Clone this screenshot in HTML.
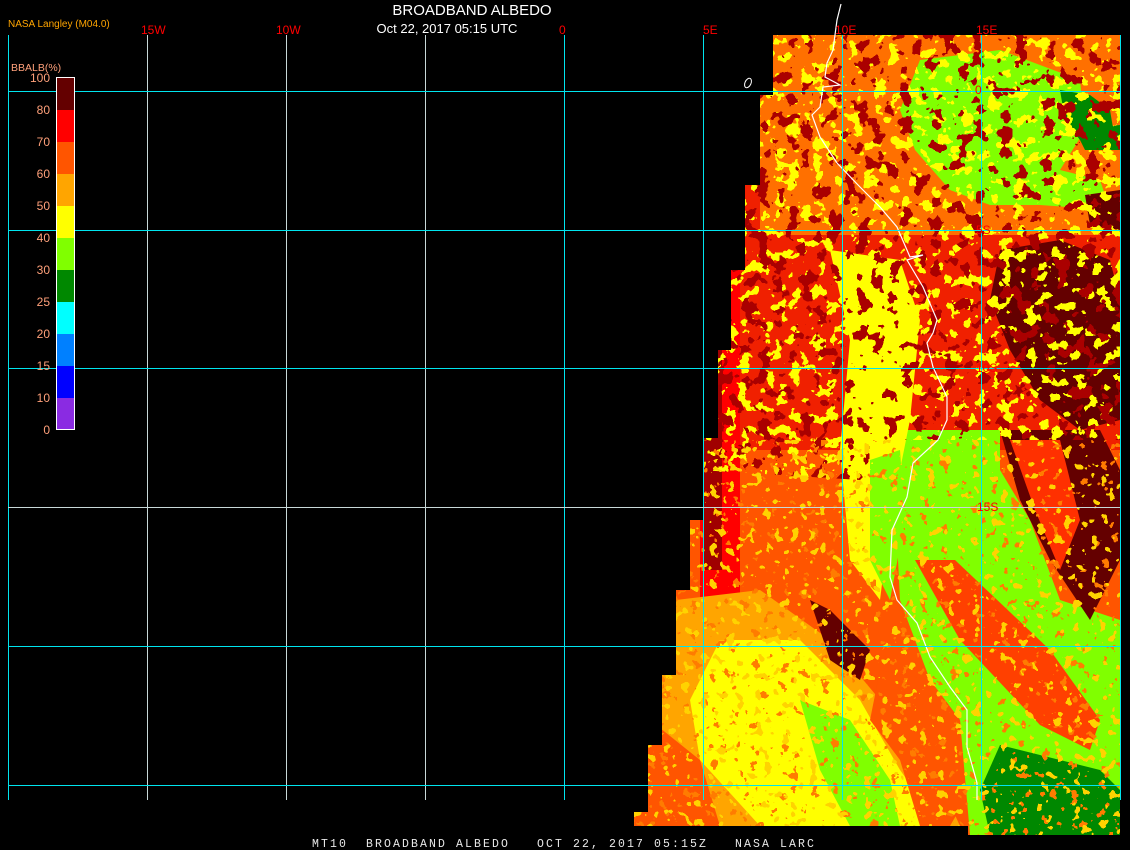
<!DOCTYPE html>
<html><head><meta charset="utf-8"><style>
html,body{margin:0;padding:0;background:#000;width:1130px;height:850px;overflow:hidden}
svg{display:block}
</style></head><body>
<svg width="1130" height="850" viewBox="0 0 1130 850" xmlns="http://www.w3.org/2000/svg">
<defs>
<clipPath id="img"><polygon points="773,35 1120,35 1120,835 968,835 968,826 634,826 634,812 648,812 648,745 662,745 662,675 676,675 676,590 690,590 690,520 704,520 704,438 718,438 718,350 731,350 731,270 745,270 745,185 760,185 760,95 773,95"/></clipPath>
<clipPath id="upper"><polygon points="600,30 1130,30 1130,440 900,440 860,480 700,470 600,470"/></clipPath>
<clipPath id="lower"><polygon points="600,440 1130,440 1130,850 600,850"/></clipPath>
<filter id="fdr" filterUnits="userSpaceOnUse" x="620" y="30" width="510" height="810">
<feTurbulence type="fractalNoise" baseFrequency="0.07" numOctaves="3" seed="4"/>
<feColorMatrix type="matrix" values="0 0 0 0 0.4  0 0 0 0 0  0 0 0 0 0  6 0 0 0 -3.15"/>
<feComponentTransfer><feFuncA type="discrete" tableValues="0 1"/></feComponentTransfer>
</filter>
<filter id="fy" filterUnits="userSpaceOnUse" x="620" y="30" width="510" height="810">
<feTurbulence type="fractalNoise" baseFrequency="0.08" numOctaves="3" seed="11"/>
<feColorMatrix type="matrix" values="0 0 0 0 1  0 0 0 0 1  0 0 0 0 0  6 0 0 0 -3.1"/>
<feComponentTransfer><feFuncA type="discrete" tableValues="0 1"/></feComponentTransfer>
</filter>
<filter id="fr" filterUnits="userSpaceOnUse" x="620" y="30" width="510" height="810">
<feTurbulence type="fractalNoise" baseFrequency="0.1" numOctaves="3" seed="21"/>
<feColorMatrix type="matrix" values="0 0 0 0 1  0 0 0 0 0.2  0 0 0 0 0  6 0 0 0 -3.6"/>
<feComponentTransfer><feFuncA type="discrete" tableValues="0 1"/></feComponentTransfer>
</filter>
<filter id="fg" filterUnits="userSpaceOnUse" x="620" y="30" width="510" height="810">
<feTurbulence type="fractalNoise" baseFrequency="0.11" numOctaves="2" seed="31"/>
<feColorMatrix type="matrix" values="0 0 0 0 1  0 0 0 0 0.65  0 0 0 0 0  6 0 0 0 -3.4"/>
<feComponentTransfer><feFuncA type="discrete" tableValues="0 1"/></feComponentTransfer>
</filter>
</defs>

<g clip-path="url(#img)">
<rect x="620" y="30" width="510" height="810" fill="#ff5500"/>
<rect x="620" y="30" width="510" height="420" fill="#f02000"/>
<rect x="760" y="35" width="360" height="200" fill="#ff7000"/>
<rect x="700" y="230" width="40" height="380" fill="#f00"/>
<rect x="704" y="270" width="18" height="300" fill="#a00000"/>
<rect x="740" y="230" width="40" height="220" fill="#f02000"/>
<polygon fill="#80ff00" points="920,60 1000,50 1080,80 1085,130 1060,170 1100,180 1110,210 1040,205 990,205 950,190 915,150 900,110"/>
<polygon fill="#008800" points="1060,90 1090,95 1110,110 1115,140 1080,140 1065,120"/>
<polygon fill="#008800" points="1075,130 1120,125 1120,150 1085,150"/>
<polygon fill="#640000" points="1000,250 1060,240 1110,260 1120,300 1120,420 1080,430 1040,400 1010,350 990,300"/>
<polygon fill="#640000" points="1085,195 1120,190 1120,230 1090,225"/>
<polygon fill="#80ff00" points="905,430 1000,430 1000,470 1030,520 1060,600 1120,620 1120,835 970,835 960,720 930,680 900,600 895,500"/>
<polygon fill="#640000" points="1000,430 1100,430 1120,470 1120,560 1090,620 1050,560 1020,500"/>
<polygon fill="#ff3000" points="1010,440 1060,440 1080,520 1060,570 1035,510"/>
<polygon fill="#ff4000" points="915,560 955,560 1050,650 1100,720 1090,750 1040,725 960,640"/>
<polygon fill="#008800" points="1000,745 1060,760 1100,770 1120,790 1120,835 990,835 980,790"/>
<polygon fill="#ffa500" points="676,600 760,590 830,640 880,700 930,760 960,826 634,826 650,700"/>
<polygon fill="#ff0" points="720,640 800,640 860,700 900,770 940,826 760,826 700,760 690,700"/>
<polygon fill="#80ff00" points="800,700 850,720 890,780 900,826 850,826 820,770"/>
<polygon fill="#ff5500" points="880,670 930,680 960,720 965,800 950,826 920,826 900,760 870,720"/>
<polygon fill="#ff5500" points="650,720 700,760 720,826 634,826"/>
<polygon fill="#ff0" points="830,250 900,260 920,320 910,420 890,520 880,600 850,560 840,450 850,340"/>
<polygon fill="#80ff00" points="870,460 900,450 905,520 890,600 870,560"/>
<polygon fill="#640000" points="810,600 830,610 870,650 860,680 830,660"/>
<g clip-path="url(#upper)">
<rect x="620" y="30" width="510" height="420" filter="url(#fy)"/>
<rect x="620" y="30" width="510" height="420" filter="url(#fdr)"/>
</g>
<g clip-path="url(#lower)">
<rect x="620" y="430" width="510" height="410" filter="url(#fr)"/>
<rect x="620" y="430" width="510" height="410" filter="url(#fg)"/>
</g>
</g>

<polyline fill="none" stroke="#fff" stroke-width="1.2" points="841,4 837,20 833,50 827,63 825,77 840,85 823,87 820,107 812,115 820,137 837,163 860,187 880,207 897,227 910,257 923,255 907,260 923,287 937,320 933,333 927,343 933,367 947,397 947,420 938,440 913,463 907,497 892,530 890,577 897,600 917,623 930,657 950,687 967,710 967,747 977,783 977,800"/>
<ellipse cx="748" cy="83" rx="3" ry="5" transform="rotate(25 748 83)" fill="none" stroke="#fff" stroke-width="1"/>

<g stroke="#00e5ee" stroke-width="1">
<line x1="8.5" y1="35" x2="8.5" y2="800"/>
<line x1="147.5" y1="35" x2="147.5" y2="800" stroke="#c8d8d8"/>
<line x1="286.5" y1="35" x2="286.5" y2="800" stroke="#c8d8d8"/>
<line x1="425.5" y1="35" x2="425.5" y2="800" stroke="#c8d8d8"/>
<line x1="564.5" y1="35" x2="564.5" y2="800"/>
<line x1="703.5" y1="35" x2="703.5" y2="800"/>
<line x1="842.5" y1="35" x2="842.5" y2="800"/>
<line x1="981.5" y1="35" x2="981.5" y2="800"/>
<line x1="1120.5" y1="35" x2="1120.5" y2="800"/>
<line x1="8" y1="91.5" x2="1120" y2="91.5"/>
<line x1="8" y1="230.5" x2="1120" y2="230.5"/>
<line x1="8" y1="368.5" x2="1120" y2="368.5"/>
<line x1="8" y1="507.5" x2="1120" y2="507.5" stroke="#c8d8d8"/>
<line x1="8" y1="646.5" x2="1120" y2="646.5"/>
<line x1="8" y1="785.5" x2="1120" y2="785.5"/>
</g>

<g font-family="Liberation Sans, sans-serif" font-size="12" fill="#f00">
<text x="141" y="34">15W</text><text x="276" y="34">10W</text>
<text x="559" y="34">0</text><text x="703" y="34">5E</text>
<text x="835" y="34">10E</text><text x="976" y="34">15E</text>
<text x="975" y="94">0</text><text x="976" y="234">5S</text>
<text x="976" y="372">10S</text><text x="977" y="511">15S</text>
</g>
<text x="472" y="15" font-family="Liberation Sans, sans-serif" font-size="15" fill="#fff" text-anchor="middle">BROADBAND ALBEDO</text>
<rect x="368" y="18" width="160" height="16" fill="#000"/>
<text x="447" y="33" font-family="Liberation Sans, sans-serif" font-size="13" fill="#fff" text-anchor="middle">Oct 22, 2017 05:15 UTC</text>
<text x="8" y="27" font-family="Liberation Sans, sans-serif" font-size="10" fill="#ffa500">NASA Langley (M04.0)</text>

<text x="11" y="71" font-family="Liberation Sans, sans-serif" font-size="10.5" fill="#ffa07a">BBALB(%)</text>
<g>
<rect x="57" y="78" width="18" height="32" fill="#640000"/>
<rect x="57" y="110" width="18" height="32" fill="#f00"/>
<rect x="57" y="142" width="18" height="32" fill="#ff5500"/>
<rect x="57" y="174" width="18" height="32" fill="#ffa500"/>
<rect x="57" y="206" width="18" height="32" fill="#ff0"/>
<rect x="57" y="238" width="18" height="32" fill="#80ff00"/>
<rect x="57" y="270" width="18" height="32" fill="#008800"/>
<rect x="57" y="302" width="18" height="32" fill="#0ff"/>
<rect x="57" y="334" width="18" height="32" fill="#0080ff"/>
<rect x="57" y="366" width="18" height="32" fill="#00f"/>
<rect x="57" y="398" width="18" height="32" fill="#8a2be2"/>
<rect x="56.5" y="77.5" width="18" height="352" fill="none" stroke="#fff"/>
</g>
<g font-family="Liberation Sans, sans-serif" font-size="12" fill="#ffa07a" text-anchor="end">
<text x="50" y="82">100</text><text x="50" y="114">80</text><text x="50" y="146">70</text>
<text x="50" y="178">60</text><text x="50" y="210">50</text><text x="50" y="242">40</text>
<text x="50" y="274">30</text><text x="50" y="306">25</text><text x="50" y="338">20</text>
<text x="50" y="370">15</text><text x="50" y="402">10</text><text x="50" y="434">0</text>
</g>

<text x="312" y="847" font-family="Liberation Mono, monospace" font-size="11.5" fill="#e8e8e8" letter-spacing="2.1" xml:space="preserve">MT10  BROADBAND ALBEDO   OCT 22, 2017 05:15Z   NASA LARC</text>
</svg>
</body></html>
